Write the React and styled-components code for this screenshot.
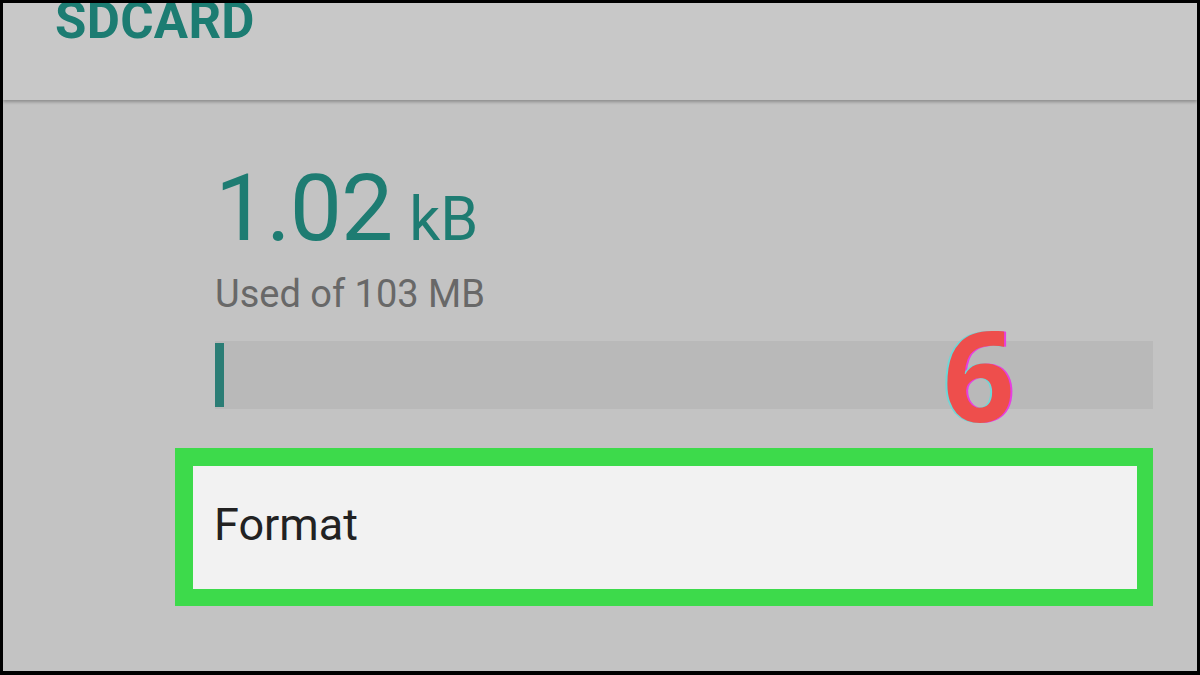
import React from 'react';
import styled, { createGlobalStyle } from 'styled-components';

const Global = createGlobalStyle`
  html, body { margin: 0; padding: 0; background: #000; }
  body { font-family: Roboto, "Liberation Sans", sans-serif; }
`;

const Frame = styled.div`
  width: 1200px;
  height: 675px;
  box-sizing: border-box;
  border: 3px solid #000;
  border-bottom-width: 4px;
  background: #c3c3c3;
  display: flex;
  flex-direction: column;
  overflow: hidden;
`;

const Header = styled.div`
  height: 97px;
  flex: none;
  background: #c8c8c8;
  box-shadow: 0 2px 3px rgba(0, 0, 0, 0.28);
  position: relative;
  z-index: 1;
  display: flex;
  align-items: flex-start;
  padding-left: 52px;
`;

const Title = styled.div`
  font-size: 51px;
  font-weight: 700;
  color: #1c7c72;
  line-height: 1;
  margin-top: -8px;
  letter-spacing: 0.3px;
`;

const Content = styled.div`
  flex: 1;
  display: flex;
  flex-direction: column;
  padding: 62px 44px 0 172px;
`;

const Stats = styled.div`
  padding-left: 40px;
`;

const Amount = styled.div`
  display: flex;
  align-items: baseline;
  color: #1e7c72;
  line-height: 1;
`;

const Big = styled.span`
  font-size: 93px;
  font-weight: 400;
  letter-spacing: -1px;
`;

const Unit = styled.span`
  font-size: 61px;
  margin-left: 17px;
`;

const Sub = styled.div`
  margin-top: 20px;
  font-size: 38px;
  color: #686868;
  line-height: 1;
`;

const BarRow = styled.div`
  position: relative;
  margin-top: 28px;
  margin-left: 40px;
  height: 68px;
  background: #b9b9b9;
  display: flex;
  align-items: center;
`;

const Fill = styled.div`
  height: 64px;
  background: #2b7d75;
`;

const Badge = styled.div`
  position: absolute;
  left: 728px;
  top: -30px;
  font-family: "Open Sans", "Noto Sans", sans-serif;
  font-weight: 700;
  font-size: 125px;
  line-height: 1;
  color: #ee4e4c;
  text-shadow: -2px 0 0 #6fd6d6, 2px 0 0 #e63ee0;
`;

const Highlight = styled.div`
  margin-top: 39px;
  height: 158px;
  box-sizing: border-box;
  border: 18px solid #3dda4b;
  border-right-width: 16px;
  border-bottom-width: 17px;
  background: #f2f2f2;
  display: flex;
  align-items: center;
  padding-left: 21px;
`;

const Option = styled.span`
  font-size: 45px;
  color: #222;
  margin-top: -6px;
`;

export default function App() {
  const used = (1.02 / 103) * 100;
  return (
    <>
      <Global />
      <Frame>
        <Header>
          <Title>SDCARD</Title>
        </Header>
        <Content>
          <Stats>
            <Amount>
              <Big>1.02</Big>
              <Unit>kB</Unit>
            </Amount>
            <Sub>Used of 103 MB</Sub>
          </Stats>
          <BarRow>
            <Fill style={{ width: `${Math.max(used, 0.9)}%` }} />
            <Badge>6</Badge>
          </BarRow>
          <Highlight>
            <Option>Format</Option>
          </Highlight>
        </Content>
      </Frame>
    </>
  );
}
